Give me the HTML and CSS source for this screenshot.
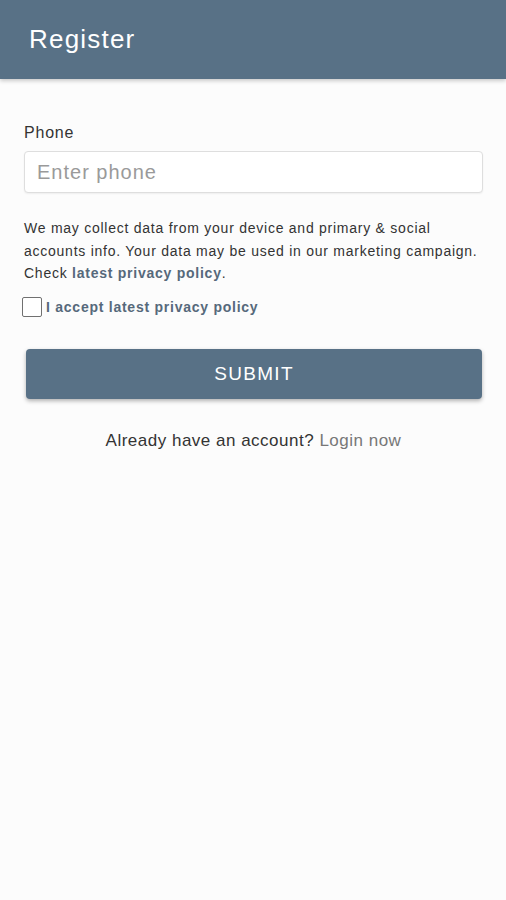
FILE: index.html
```html
<!DOCTYPE html>
<html lang="en">
<head>
    <meta charset="UTF-8">
    <meta name="viewport" content="width=device-width, initial-scale=1.0">
    <title>Register</title>
    <link rel="stylesheet" href="styles.css">
</head>
<body>

    <header class="app-bar">
        <h1>Register</h1>
    </header>

    <div class="container">
        <form class="register-form">
            <label for="phone" class="field-label">Phone</label>
            <input type="text" id="phone" class="field-input" placeholder="Enter phone">

            <p class="notice">
                We may collect data from your device and primary &amp; social
                accounts info. Your data may be used in our marketing campaign.
                Check <a href="#" class="link">latest privacy policy</a>.
            </p>

            <label class="accept">
                <input type="checkbox" class="accept-box">
                <span>I accept latest privacy policy</span>
            </label>

            <button type="button" class="submit">SUBMIT</button>
        </form>

        <div class="login-line">
            Already have an account? <a href="#" class="login-link">Login now</a>
        </div>
    </div>

</body>
</html>
```

FILE: styles.css
```css
body {
    font-family: 'Liberation Sans', Arial, sans-serif;
    margin: 0;
    padding: 0;
    background: #fcfcfc;
    color: #333;
}

.app-bar {
    background: #587186;
    height: 79px;
    display: flex;
    align-items: center;
    padding: 0 29px;
    box-shadow: 0 2px 4px rgba(0, 0, 0, 0.2);
}

.app-bar h1 {
    margin: 0;
    color: #fff;
    font-size: 26px;
    font-weight: normal;
    letter-spacing: 1.2px;
}

.container {
    padding: 43px 23px 0 24px;
}

.register-form {
    display: flex;
    flex-direction: column;
}

.field-label {
    font-size: 16px;
    line-height: 22px;
    letter-spacing: 0.8px;
    color: #333;
}

.field-input {
    margin-top: 7px;
    height: 42px;
    box-sizing: border-box;
    border: 1px solid #dedede;
    border-radius: 4px;
    background: #fff;
    box-shadow: 0 1px 2px rgba(0, 0, 0, 0.06);
    padding: 0 12px;
    font-family: inherit;
    font-size: 20px;
    letter-spacing: 1px;
    color: #333;
}

.field-input::placeholder {
    color: #9a9a9a;
}

.notice {
    margin: 24px 0 0;
    font-size: 14px;
    line-height: 22.5px;
    letter-spacing: 0.75px;
    color: #333;
}

.link {
    color: #56697b;
    font-weight: bold;
    text-decoration: none;
}

.accept {
    display: flex;
    align-items: center;
    gap: 4px;
    margin: 12px 0 0 -2px;
    font-size: 14px;
    font-weight: bold;
    letter-spacing: 0.75px;
    color: #56697b;
}

.accept-box {
    appearance: none;
    width: 20px;
    height: 20px;
    margin: 0;
    border: 1px solid #707070;
    border-radius: 2px;
    background: #fff;
}

.submit {
    margin: 32px 1px 0 2px;
    height: 50px;
    background: #587186;
    color: #fff;
    border: none;
    border-radius: 4px;
    font-family: inherit;
    font-size: 19px;
    letter-spacing: 1.3px;
    box-shadow: 0 2px 4px rgba(0, 0, 0, 0.3);
    cursor: pointer;
}

.login-line {
    margin-top: 32px;
    text-align: center;
    font-size: 17px;
    line-height: 20px;
    letter-spacing: 0.5px;
    color: #333;
}

.login-link {
    color: #777;
    text-decoration: none;
}
```
